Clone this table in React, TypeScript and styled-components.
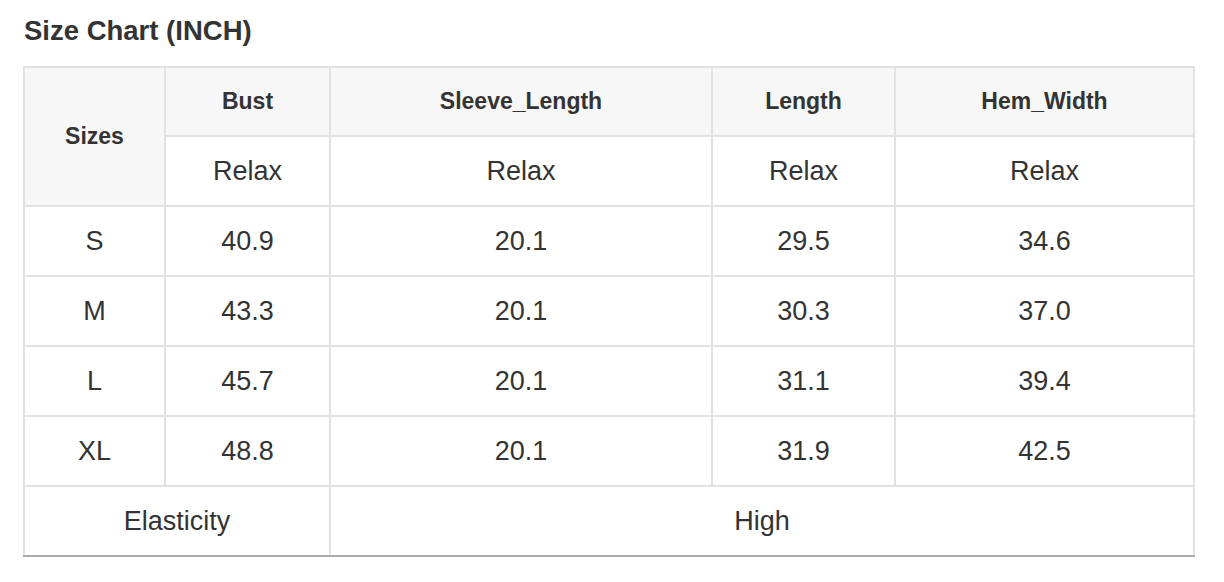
import React from "react";
import styled, { createGlobalStyle } from "styled-components";

const GlobalStyle = createGlobalStyle`
  html, body { margin: 0; padding: 0; background: #ffffff; }
  body { font-family: "Liberation Sans", Arial, Helvetica, sans-serif; color: #333333; }
`;

const Page = styled.div`
  padding: 13px 29px 0 23px;
  width: 1170px;
`;

const Title = styled.h2`
  margin: 0 0 18px 1px;
  font-size: 27.5px;
  line-height: 35px;
  font-weight: 700;
  color: #333333;
`;

const Table = styled.table`
  width: 1170px;
  border-collapse: collapse;
  table-layout: fixed;
`;

const Row = styled.tr<{ $h: number }>`
  height: ${(p) => p.$h}px;
`;

const HeadCell = styled.th<{ $shade?: boolean }>`
  border: 2px solid #e2e2e2;
  background: ${(p) => (p.$shade ? "#f7f7f7" : "#ffffff")};
  font-size: 23px;
  font-weight: 700;
  text-align: center;
  vertical-align: middle;
  padding: 0;
  color: #333333;
`;

const Cell = styled.td<{ $last?: boolean }>`
  border: 2px solid #e2e2e2;
  border-bottom: 2px solid ${(p) => (p.$last ? "#acacac" : "#e2e2e2")};
  font-size: 27px;
  font-weight: 400;
  text-align: center;
  vertical-align: middle;
  padding: 0;
  color: #333333;
`;

const columns = ["Bust", "Sleeve_Length", "Length", "Hem_Width"];
const widths = [141, 165, 382, 183, 299];

const rows: [string, string, string, string, string][] = [
  ["S", "40.9", "20.1", "29.5", "34.6"],
  ["M", "43.3", "20.1", "30.3", "37.0"],
  ["L", "45.7", "20.1", "31.1", "39.4"],
  ["XL", "48.8", "20.1", "31.9", "42.5"],
];

export default function App() {
  return (
    <>
      <GlobalStyle />
      <Page>
        <Title>Size Chart (INCH)</Title>
        <Table>
          <colgroup>
            {widths.map((w, i) => (
              <col key={i} style={{ width: w }} />
            ))}
          </colgroup>
          <thead>
            <Row $h={69}>
              <HeadCell $shade rowSpan={2}>
                Sizes
              </HeadCell>
              {columns.map((c) => (
                <HeadCell key={c} $shade>
                  {c}
                </HeadCell>
              ))}
            </Row>
            <Row $h={70}>
              {columns.map((c) => (
                <Cell key={c}>Relax</Cell>
              ))}
            </Row>
          </thead>
          <tbody>
            {rows.map((r) => (
              <Row $h={70} key={r[0]}>
                {r.map((v, i) => (
                  <Cell key={i}>{v}</Cell>
                ))}
              </Row>
            ))}
            <Row $h={70}>
              <Cell $last colSpan={2}>
                Elasticity
              </Cell>
              <Cell $last colSpan={3}>
                High
              </Cell>
            </Row>
          </tbody>
        </Table>
      </Page>
    </>
  );
}
